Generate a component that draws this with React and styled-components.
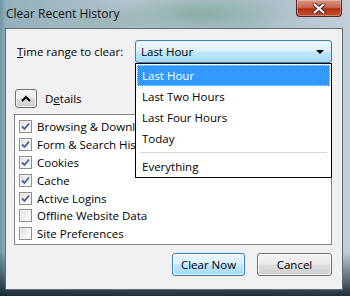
import React from "react";
import styled, { createGlobalStyle } from "styled-components";

const GlobalStyle = createGlobalStyle`
  html, body {
    margin: 0;
    padding: 0;
  }
  body {
    font-family: "Open Sans", "Noto Sans", sans-serif;
    font-size: 11.5px;
    color: #000;
  }
`;

const ranges = ["Last Hour", "Last Two Hours", "Last Four Hours", "Today"];

const items = [
  { label: "Browsing & Download History", checked: true },
  { label: "Form & Search History", checked: true },
  { label: "Cookies", checked: true },
  { label: "Cache", checked: true },
  { label: "Active Logins", checked: true },
  { label: "Offline Website Data", checked: false },
  { label: "Site Preferences", checked: false },
];

const CheckBox = ({ checked }) => (
  <Box>
    {checked && (
      <svg width="9" height="9" viewBox="0 0 9 9">
        <path
          d="M1 4.5 L3.5 7 L8 1.5"
          fill="none"
          stroke="#4a5d9a"
          strokeWidth="1.8"
        />
      </svg>
    )}
  </Box>
);

const App = () => (
  <>
    <GlobalStyle />
    <Window>
      <TitleBar>
        <Title>Clear Recent History</Title>
        <CloseButton>
          <svg width="14" height="11" viewBox="0 0 14 11">
            <path
              d="M2.5 1.5 L11.5 9.5 M11.5 1.5 L2.5 9.5"
              stroke="#4a1a12"
              strokeWidth="3.8"
              strokeLinecap="round"
            />
            <path
              d="M2.5 1.5 L11.5 9.5 M11.5 1.5 L2.5 9.5"
              stroke="#fff"
              strokeWidth="2.2"
              strokeLinecap="round"
            />
          </svg>
        </CloseButton>
      </TitleBar>
      <Client>
        <RangeRow>
          <Label>
            <u>T</u>ime range to clear:
          </Label>
          <ComboWrap>
            <Combo>
              <span>Last Hour</span>
              <Arrow />
            </Combo>
            <Popup>
              {ranges.map((r, i) => (
                <Option key={r} $selected={i === 0}>
                  {r}
                </Option>
              ))}
              <Separator />
              <Option>Everything</Option>
            </Popup>
          </ComboWrap>
        </RangeRow>
        <DetailsRow>
          <SmallButton>
            <svg width="10" height="7" viewBox="0 0 10 7">
              <path
                d="M1 6 L5 2 L9 6"
                fill="none"
                stroke="#000"
                strokeWidth="2"
              />
            </svg>
          </SmallButton>
          <span>
            D<u>e</u>tails
          </span>
        </DetailsRow>
        <ListBox>
          {items.map((it) => (
            <Item key={it.label}>
              <CheckBox checked={it.checked} />
              <span>{it.label}</span>
            </Item>
          ))}
        </ListBox>
        <ButtonRow>
          <Button $default $width={73}>
            Clear Now
          </Button>
          <Button $width={75}>Cancel</Button>
        </ButtonRow>
      </Client>
    </Window>
  </>
);

const Window = styled.div`
  width: 350px;
  height: 296px;
  box-sizing: border-box;
  display: flex;
  flex-direction: column;
  padding: 0 7px 6px 5px;
  overflow: hidden;
  background:
    radial-gradient(ellipse 90px 22px at 200px 14px, rgba(110, 160, 135, 0.6), transparent),
    radial-gradient(ellipse 70px 20px at 110px 22px, rgba(140, 170, 160, 0.45), transparent),
    linear-gradient(180deg, rgba(0, 0, 0, 0) 85%, rgba(15, 30, 40, 0.9) 100%),
    linear-gradient(90deg, #6e97a3 0px, #93b0bb 6px, #b6c6d1 40%, #acbfcb 75%, #c2ced6 100%);
`;

const TitleBar = styled.div`
  height: 28px;
  display: flex;
  justify-content: space-between;
  align-items: flex-start;
  flex-shrink: 0;
`;

const Title = styled.div`
  padding: 5px 0 0 1px;
  font-size: 12px;
  color: #111;
`;

const CloseButton = styled.div`
  width: 46px;
  height: 17px;
  margin-right: 1px;
  box-sizing: border-box;
  border: 1px solid #4a2a25;
  border-top: none;
  border-radius: 0 0 4px 4px;
  background: linear-gradient(180deg, #d99484 0%, #c96a55 45%, #b22f16 55%, #c85234 100%);
  box-shadow: inset 0 0 0 1px rgba(255, 255, 255, 0.3);
  display: flex;
  align-items: center;
  justify-content: center;
`;

const Client = styled.div`
  flex: 1;
  background: #f0f0f0;
  border: 1px solid #5d6c77;
  padding: 11px 10px 13px 8px;
  display: flex;
  flex-direction: column;
`;

const RangeRow = styled.div`
  display: flex;
  align-items: center;
  height: 23px;
  padding-left: 3px;
`;

const Label = styled.div`
  width: 118px;
`;

const ComboWrap = styled.div`
  position: relative;
  width: 197px;
  height: 23px;
`;

const Combo = styled.div`
  box-sizing: border-box;
  height: 23px;
  border: 1px solid #3c7fb1;
  border-radius: 3px;
  background: linear-gradient(180deg, #ecf7fd 0%, #dcf1fc 48%, #c0e6fb 52%, #a9d9f4 100%);
  display: flex;
  align-items: center;
  justify-content: space-between;
  padding: 0 7px 0 5px;
`;

const Arrow = styled.span`
  width: 0;
  height: 0;
  border-left: 4px solid transparent;
  border-right: 4px solid transparent;
  border-top: 4px solid #000;
  margin-top: 1px;
`;

/* the open drop-down lies over the history list */
const Popup = styled.div`
  position: absolute;
  top: 23px;
  left: 0;
  width: 197px;
  box-sizing: border-box;
  background: #fff;
  border: 1px solid #000;
  padding: 1px 1px 0 1px;
  z-index: 2;
`;

const Option = styled.div`
  height: 21px;
  box-sizing: border-box;
  display: flex;
  align-items: center;
  padding-left: 4px;
  background: ${(p) => (p.$selected ? "#3399ff" : "transparent")};
  color: ${(p) => (p.$selected ? "#fff" : "#000")};
  border: 1px ${(p) => (p.$selected ? "dotted #c9e2ff" : "solid transparent")};
`;

const Separator = styled.div`
  height: 1px;
  background: #d8d8d8;
  margin: 3px;
`;

const DetailsRow = styled.div`
  display: flex;
  align-items: center;
  gap: 8px;
  margin-top: 26px;
  padding-left: 1px;
  height: 19px;
`;

const SmallButton = styled.div`
  width: 22px;
  height: 19px;
  box-sizing: border-box;
  border: 1px solid #707070;
  border-radius: 3px;
  background: linear-gradient(180deg, #f2f2f2 0%, #ebebeb 48%, #dddddd 52%, #cfcfcf 100%);
  box-shadow: inset 0 0 0 1px rgba(255, 255, 255, 0.7);
  display: flex;
  align-items: center;
  justify-content: center;
`;

const ListBox = styled.div`
  margin-top: 6px;
  height: 131px;
  box-sizing: border-box;
  background: #fff;
  border: 1px solid #828790;
  padding: 3px 0 0 4px;
  overflow: hidden;
`;

const Item = styled.div`
  height: 17.8px;
  display: flex;
  align-items: center;
  gap: 5px;
  white-space: nowrap;
`;

const Box = styled.div`
  width: 13px;
  height: 13px;
  box-sizing: border-box;
  border: 1px solid #8e8f8f;
  background: linear-gradient(135deg, #dcdcdc 0%, #f4f4f4 60%, #ffffff 100%);
  box-shadow: inset 0 0 0 1px #f4f4f4;
  display: flex;
  align-items: center;
  justify-content: center;
  flex-shrink: 0;
`;

const ButtonRow = styled.div`
  margin-top: auto;
  display: flex;
  justify-content: flex-end;
  gap: 12px;
`;

const Button = styled.div`
  width: ${(p) => p.$width}px;
  height: 23px;
  box-sizing: border-box;
  border: 1px solid ${(p) => (p.$default ? "#3c7fb1" : "#707070")};
  border-radius: 3px;
  background: ${(p) =>
    p.$default
      ? "linear-gradient(180deg, #eaf6fd 0%, #d9f0fc 48%, #bee6fd 52%, #a7d9f5 100%)"
      : "linear-gradient(180deg, #f2f2f2 0%, #ebebeb 48%, #dddddd 52%, #cfcfcf 100%)"};
  box-shadow: inset 0 0 0 1px rgba(255, 255, 255, 0.7);
  display: flex;
  align-items: center;
  justify-content: center;
`;

export default App;
